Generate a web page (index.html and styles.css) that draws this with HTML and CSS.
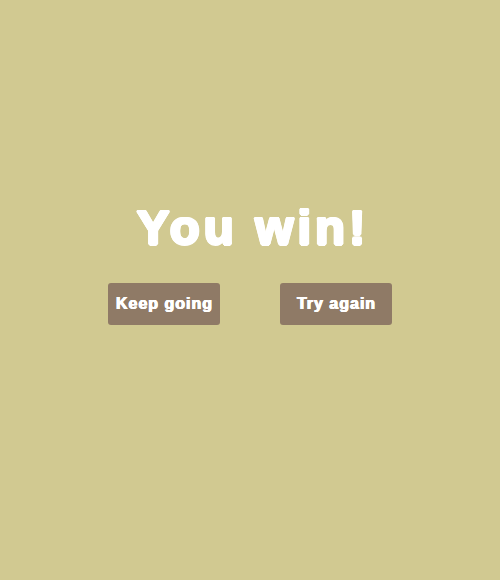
FILE: index.html
```html
<!DOCTYPE html>
<html>
<head>
<meta charset="utf-8">
<link rel="stylesheet" href="styles.css">
</head>
<body>
<div class="overlay">
  <p class="title">You win!</p>
  <div class="actions">
    <a class="btn">Keep going</a>
    <a class="btn">Try again</a>
  </div>
</div>
</body>
</html>
```
FILE: styles.css
```css
html, body {
  margin: 0;
  padding: 0;
}
body {
  width: 500px;
  height: 580px;
  background: #d1c991;
  font-family: "Liberation Sans", Arial, sans-serif;
}
.overlay {
  display: flex;
  flex-direction: column;
  align-items: center;
  padding-top: 197px;
}
.title {
  margin: 0;
  padding-left: 6px;
  font-size: 49px;
  line-height: 60px;
  font-weight: bold;
  letter-spacing: 4px;
  color: #ffffff;
  text-shadow:
    1.5px 0 0 #ffffff, -1.5px 0 0 #ffffff,
    0 1.5px 0 #ffffff, 0 -1.5px 0 #ffffff,
    1px 1px 0 #ffffff, -1px -1px 0 #ffffff,
    1px -1px 0 #ffffff, -1px 1px 0 #ffffff;
}
.actions {
  display: flex;
  gap: 60px;
  margin-top: 26px;
}
.btn {
  display: block;
  width: 112px;
  height: 42px;
  line-height: 42px;
  text-align: center;
  text-indent: 1px;
  background: #8f7a66;
  border-radius: 3px;
  color: #ffffff;
  font-size: 16px;
  font-weight: bold;
  letter-spacing: 1px;
  text-shadow: 0.5px 0 0 #ffffff, -0.5px 0 0 #ffffff, 0 0.4px 0 #ffffff;
}
```
